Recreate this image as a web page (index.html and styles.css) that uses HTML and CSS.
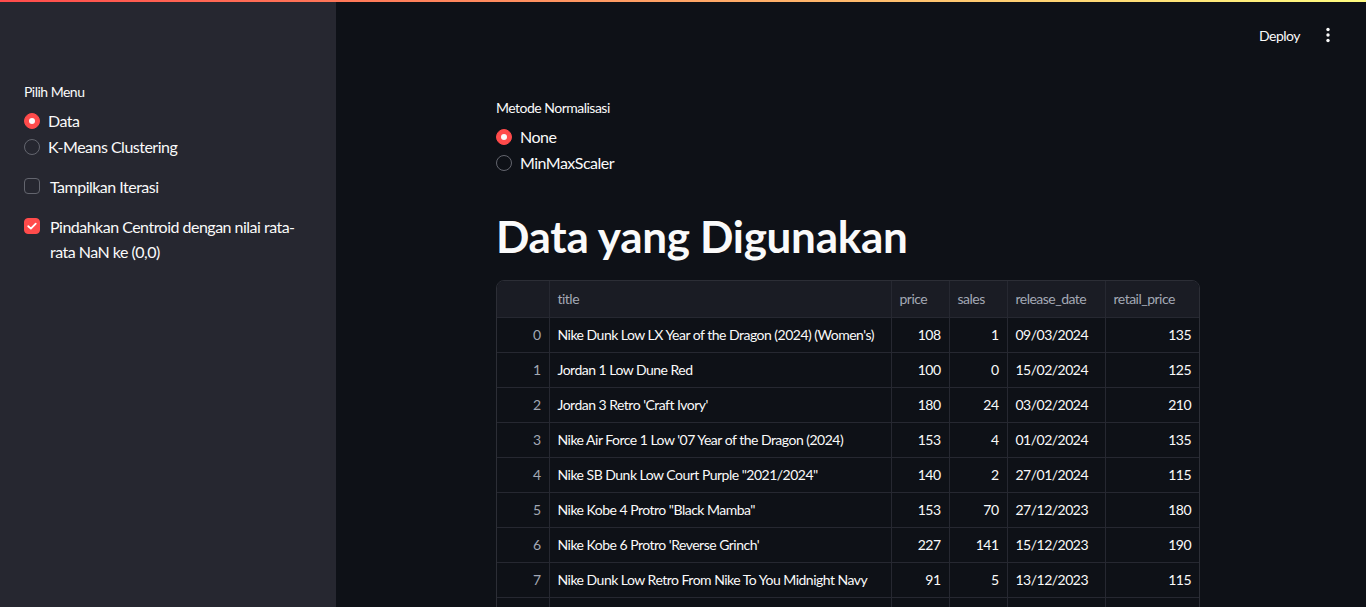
FILE: index.html
```html
<!DOCTYPE html>
<html lang="id">
<head>
<meta charset="utf-8">
<title>Data</title>
<link rel="stylesheet" href="styles.css">
</head>
<body>
<div class="topbar"></div>
<div class="app">
  <aside class="sidebar">
    <div class="side-inner">
      <div class="label">Pilih Menu</div>
      <div class="radios">
        <div class="radio on"><span class="dot"></span><span>Data</span></div>
        <div class="radio"><span class="dot"></span><span>K-Means Clustering</span></div>
      </div>
      <div class="check first"><span class="box"></span><span>Tampilkan Iterasi</span></div>
      <div class="check on"><span class="box"><svg viewBox="0 0 16 16" width="12" height="12"><path d="M3 8.3 L6.5 11.5 L13 4.8" fill="none" stroke="#fff" stroke-width="2.4" stroke-linecap="round" stroke-linejoin="round"/></svg></span><span>Pindahkan Centroid dengan nilai rata-rata NaN ke (0,0)</span></div>
    </div>
  </aside>
  <main class="main">
    <header class="header">
      <span class="deploy">Deploy</span>
      <svg class="kebab" viewBox="0 0 4 16" width="4" height="16"><circle cx="2" cy="2.5" r="1.7" fill="#fafafa"/><circle cx="2" cy="8" r="1.7" fill="#fafafa"/><circle cx="2" cy="13.5" r="1.7" fill="#fafafa"/></svg>
    </header>
    <div class="block">
      <div class="label">Metode Normalisasi</div>
      <div class="radios">
        <div class="radio on"><span class="dot"></span><span>None</span></div>
        <div class="radio"><span class="dot"></span><span>MinMaxScaler</span></div>
      </div>
      <h1>Data yang Digunakan</h1>
      <div class="table-wrap">
        <table>
          <colgroup><col class="c0"><col class="c1"><col class="c2"><col class="c3"><col class="c4"><col class="c5"></colgroup>
          <thead><tr><th></th><th>title</th><th>price</th><th>sales</th><th>release_date</th><th>retail_price</th></tr></thead>
          <tbody>
            <tr><td class="idx">0</td><td>Nike Dunk Low LX Year of the Dragon (2024) (Women's)</td><td class="num">108</td><td class="num">1</td><td>09/03/2024</td><td class="num">135</td></tr>
            <tr><td class="idx">1</td><td>Jordan 1 Low Dune Red</td><td class="num">100</td><td class="num">0</td><td>15/02/2024</td><td class="num">125</td></tr>
            <tr><td class="idx">2</td><td>Jordan 3 Retro 'Craft Ivory'</td><td class="num">180</td><td class="num">24</td><td>03/02/2024</td><td class="num">210</td></tr>
            <tr><td class="idx">3</td><td>Nike Air Force 1 Low '07 Year of the Dragon (2024)</td><td class="num">153</td><td class="num">4</td><td>01/02/2024</td><td class="num">135</td></tr>
            <tr><td class="idx">4</td><td>Nike SB Dunk Low Court Purple "2021/2024"</td><td class="num">140</td><td class="num">2</td><td>27/01/2024</td><td class="num">115</td></tr>
            <tr><td class="idx">5</td><td>Nike Kobe 4 Protro "Black Mamba"</td><td class="num">153</td><td class="num">70</td><td>27/12/2023</td><td class="num">180</td></tr>
            <tr><td class="idx">6</td><td>Nike Kobe 6 Protro 'Reverse Grinch'</td><td class="num">227</td><td class="num">141</td><td>15/12/2023</td><td class="num">190</td></tr>
            <tr><td class="idx">7</td><td>Nike Dunk Low Retro From Nike To You Midnight Navy</td><td class="num">91</td><td class="num">5</td><td>13/12/2023</td><td class="num">115</td></tr>
          </tbody>
        </table>
        <div class="filler"></div>
      </div>
    </div>
  </main>
</div>
</body>
</html>
```
FILE: styles.css
```css
* { box-sizing: border-box; }
html, body { margin: 0; height: 100%; }
body {
  background: #0e1117;
  color: #fafafa;
  font-family: "Lato", "Noto Sans", sans-serif;
  letter-spacing: -0.032em;
  overflow: hidden;
  position: relative;
}
.topbar {
  position: absolute;
  top: 0; left: 0; right: 0;
  height: 2px;
  background: linear-gradient(90deg, #ff4b4b, #fffd80);
  z-index: 5;
}
.app { display: flex; height: 100vh; }
.sidebar {
  width: 336px;
  flex: none;
  background: #262730;
  padding: 84px 24px 0 24px;
}
.label {
  font-size: 14px;
  line-height: 16px;
  color: #fafafa;
  margin-bottom: 9px;
}
.radios { display: flex; flex-direction: column; gap: 2px; }
.radio {
  display: flex;
  align-items: center;
  gap: 8px;
  font-size: 16px;
  line-height: 24px;
}
.radio .dot {
  width: 16px; height: 16px;
  border-radius: 50%;
  border: 1px solid #63656e;
  flex: none;
  position: relative;
}
.radio.on .dot { background: #ff4b4b; border-color: #ff4b4b; }
.radio.on .dot::after {
  content: "";
  position: absolute;
  left: 4px; top: 4px;
  width: 6px; height: 6px;
  border-radius: 50%;
  background: #fafafa;
}
.check {
  display: flex;
  align-items: flex-start;
  gap: 10px;
  font-size: 16px;
  line-height: 25px;
  margin-top: 15px;
  padding-right: 0;
}
.check.first { margin-top: 15px; }
.check .box {
  width: 16px; height: 16px;
  margin-top: 4px;
  border: 1px solid #63656e;
  border-radius: 4px;
  flex: none;
  display: flex;
  align-items: center;
  justify-content: center;
}
.check.on .box { background: #ff4b4b; border-color: #ff4b4b; }
.main {
  flex: 1;
  display: flex;
  flex-direction: column;
  padding-right: 6px;
  min-width: 0;
}
.header {
  height: 60px;
  flex: none;
  display: flex;
  align-items: center;
  justify-content: flex-end;
  padding: 10px 30px 0 0;
  gap: 26px;
}
.deploy { font-size: 14px; }
.kebab { display: block; }
.block {
  width: 704px;
  margin: 0 auto;
  padding-top: 40px;
}
h1 {
  font-size: 44px;
  font-weight: 700;
  letter-spacing: -0.3px;
  margin: 31px 0 0 0;
  line-height: 60px;
  padding-bottom: 14px;
}
.table-wrap {
  border: 1px solid #2c2e36;
  border-radius: 8px;
  overflow: hidden;
  width: 704px;
}
table {
  border-collapse: collapse;
  table-layout: fixed;
  width: 703px;
  font-size: 14px;
}
col.c0 { width: 52px; }
col.c1 { width: 342px; }
col.c2 { width: 58px; }
col.c3 { width: 58px; }
col.c4 { width: 98px; }
col.c5 { width: 95px; }
th, td {
  height: 35px;
  padding: 0 8px;
  border-right: 1px solid #262831;
  border-bottom: 1px solid #262831;
  text-align: left;
  white-space: nowrap;
  overflow: hidden;
}
th:last-child, td:last-child { border-right: none; }
thead th {
  background: #1a1c24;
  color: #a3a8b4;
  font-weight: 400;
  height: 36px;
}
td.num, td.idx { text-align: right; }
td:last-child { padding-right: 9px; }
td.idx { color: #a3a8b4; }
.filler {
  height: 60px;
  background: linear-gradient(90deg, transparent 52px, #262831 52px, #262831 53px, transparent 53px, transparent 394px, #262831 394px, #262831 395px, transparent 395px, transparent 452px, #262831 452px, #262831 453px, transparent 453px, transparent 510px, #262831 510px, #262831 511px, transparent 511px, transparent 608px, #262831 608px, #262831 609px, transparent 609px);
}
```
